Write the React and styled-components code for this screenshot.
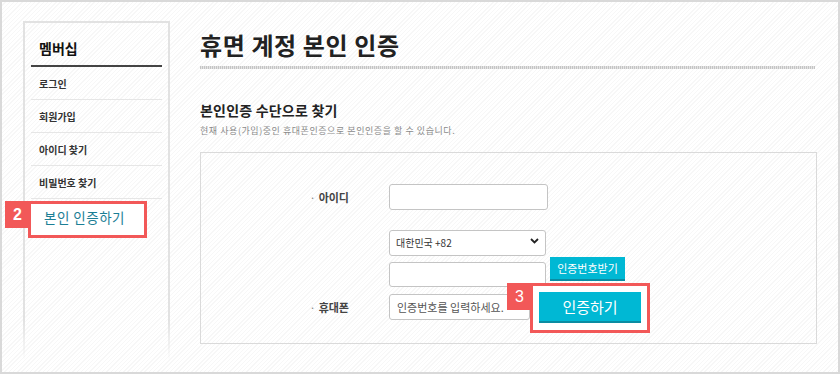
import React from "react";
import styled, { createGlobalStyle } from "styled-components";

const GlobalStyle = createGlobalStyle`
  html, body { margin: 0; padding: 0; background: #fff; }
  * { box-sizing: border-box; }
  body { font-family: "Noto Sans CJK KR", "Noto Sans", sans-serif; }
`;

const RED = "#f25858";
const CYAN = "#00b8d4";

const Frame = styled.div`
  width: 840px;
  height: 374px;
  border: 2px solid #d9d9d9;
  background: repeating-linear-gradient(135deg, #ffffff 0 2px, #f7f7f7 2px 3px);
  display: flex;
  align-items: flex-start;
  padding: 19px 0 0 21px;
  overflow: hidden;
`;

const Sidebar = styled.nav`
  width: 147px;
  height: 338px;
  border: 2px solid transparent;
  border-bottom: none;
  border-image: linear-gradient(to bottom, #e2e2e2 0%, #e2e2e2 88%, rgba(226, 226, 226, 0) 100%) 2;
  padding: 0 6px;
  flex-shrink: 0;
`;

const SideHeader = styled.div`
  height: 44px;
  padding: 8px 0 0 8px;
  display: flex;
  align-items: center;
  font-size: 14px;
  font-weight: 700;
  color: #111;
  border-bottom: 2px solid #444;
`;

const SideItem = styled.div`
  position: relative;
  height: 33px;
  display: flex;
  align-items: center;
  padding-left: 8px;
  font-size: 10px;
  font-weight: 700;
  color: #333;
  border-bottom: ${(p) => (p.$last ? "none" : "1px solid #e6e6e6")};
`;

const ActiveLabel = styled.span`
  position: relative;
  z-index: 2;
  margin: 3px 0 0 5px;
  font-size: 13.5px;
  font-weight: 400;
  letter-spacing: 0.5px;
  color: #1b7e95;
`;

const SideCallout = styled.div`
  position: absolute;
  left: -3px;
  top: 2px;
  width: 119px;
  height: 37px;
  border: 3px solid ${RED};
  background: #fff;
  z-index: 1;
`;

const Badge = styled.div`
  position: absolute;
  left: -26px;
  top: -3px;
  width: 25px;
  height: 27px;
  background: ${RED};
  color: #fff;
  font-family: "Liberation Sans", Arial, sans-serif;
  font-size: 16px;
  display: flex;
  align-items: center;
  justify-content: center;
  z-index: 3;
`;

const Main = styled.main`
  margin-left: 30px;
  width: 617px;
  display: flex;
  flex-direction: column;
`;

const Title = styled.h1`
  margin: 9px 0 0;
  font-size: 24px;
  line-height: 30px;
  font-weight: 700;
  letter-spacing: 0.6px;
  color: #222;
`;

const DottedRule = styled.div`
  margin-top: 6px;
  width: 615px;
  height: 3px;
  background: repeating-linear-gradient(90deg, #c4c4c4 0 1px, #e4e4e4 1px 2px);
`;

const SubTitle = styled.h2`
  margin: 32px 0 0;
  font-size: 14px;
  line-height: 18px;
  font-weight: 700;
  letter-spacing: 0.2px;
  color: #222;
`;

const Desc = styled.p`
  margin: 6px 0 0;
  font-size: 9px;
  line-height: 12px;
  letter-spacing: 0.55px;
  color: #8a8a8a;
`;

const FormBox = styled.div`
  margin-top: 15px;
  width: 617px;
  height: 192px;
  border: 1px solid #dadada;
  padding: 31px 0 0 0;
  display: flex;
  flex-direction: column;
  gap: 18px;
`;

const FormRow = styled.div`
  display: grid;
  grid-template-columns: 148px 1fr;
  column-gap: 40px;
  align-items: ${(p) => p.$align || "center"};
`;

const Label = styled.div`
  text-align: right;
  font-size: 11px;
  font-weight: 700;
  color: #444;
  line-height: 26px;
`;

const Dot = styled.span`
  color: #888;
  font-weight: 400;
  margin-right: 3px;
`;

const TextInput = styled.input`
  width: ${(p) => p.$w}px;
  height: ${(p) => p.$h || 26}px;
  margin-top: ${(p) => p.$mt || 0}px;
  border: 1px solid #c4c4c4;
  border-radius: 3px;
  background: #fff;
  padding: 0 7px;
  font-family: inherit;
  font-size: 11px;
  color: #333;
  outline: none;
  flex-shrink: 0;
  &::placeholder { color: #555; }
`;

const SelectWrap = styled.div`
  position: relative;
  width: 157px;
  height: 26px;
`;

const Select = styled.select`
  appearance: none;
  width: 100%;
  height: 100%;
  border: 1px solid #c4c4c4;
  border-radius: 3px;
  background: #fff;
  padding: 0 6px;
  font-family: inherit;
  font-size: 10px;
  color: #333;
  outline: none;
`;

const Chevron = styled.svg`
  position: absolute;
  right: 7px;
  top: 10px;
  pointer-events: none;
`;

const PhoneCol = styled.div`
  display: flex;
  flex-direction: column;
`;

const CodeRow = styled.div`
  display: flex;
  align-items: flex-start;
  gap: 4px;
  margin-top: 3px;
`;

const SmallButton = styled.button`
  width: 75px;
  height: 24px;
  border: none;
  border-bottom: 2px solid #0b8ca2;
  background: ${CYAN};
  color: #fff;
  font-family: inherit;
  font-size: 11px;
  padding: 0;
`;

const ConfirmRow = styled.div`
  display: flex;
  align-items: center;
  height: 26px;
  margin-top: 7px;
`;

const Callout = styled.div`
  position: relative;
  width: 120px;
  height: 50px;
  border: 3px solid ${RED};
  background: #fff;
  padding: 6px;
  flex-shrink: 0;
  margin-top: 2px;
`;

const BigButton = styled.button`
  width: 102px;
  height: 31px;
  border: none;
  border-bottom: 2px solid #0b8ca2;
  background: ${CYAN};
  color: #fff;
  font-family: inherit;
  font-size: 15px;
  padding: 0;
`;

const sideItems = ["로그인", "회원가입", "아이디 찾기", "비밀번호 찾기"];

export default function App() {
  return (
    <>
      <GlobalStyle />
      <Frame>
        <Sidebar>
          <SideHeader>멤버십</SideHeader>
          {sideItems.map((t) => (
            <SideItem key={t}>{t}</SideItem>
          ))}
          <SideItem $last>
            <SideCallout>
              <Badge>2</Badge>
            </SideCallout>
            <ActiveLabel>본인 인증하기</ActiveLabel>
          </SideItem>
        </Sidebar>
        <Main>
          <Title>휴면 계정 본인 인증</Title>
          <DottedRule />
          <SubTitle>본인인증 수단으로 찾기</SubTitle>
          <Desc>현재 사용(가입)중인 휴대폰인증으로 본인인증을 할 수 있습니다.</Desc>
          <FormBox>
            <FormRow>
              <Label>
                <Dot>·</Dot>아이디
              </Label>
              <TextInput $w={159} type="text" />
            </FormRow>
            <FormRow $align="end">
              <Label>
                <Dot>·</Dot>휴대폰
              </Label>
              <PhoneCol>
                <SelectWrap>
                  <Select defaultValue="82">
                    <option value="82">대한민국 +82</option>
                  </Select>
                  <Chevron width="9" height="6" viewBox="0 0 9 6">
                    <path d="M1 1 L4.5 4.5 L8 1" fill="none" stroke="#222" strokeWidth="1.8" />
                  </Chevron>
                </SelectWrap>
                <CodeRow>
                  <TextInput $w={157} $h={25} $mt={5} type="text" />
                  <SmallButton>인증번호받기</SmallButton>
                </CodeRow>
                <ConfirmRow>
                  <TextInput $w={141} type="text" placeholder="인증번호를 입력하세요." />
                  <Callout>
                    <Badge>3</Badge>
                    <BigButton>인증하기</BigButton>
                  </Callout>
                </ConfirmRow>
              </PhoneCol>
            </FormRow>
          </FormBox>
        </Main>
      </Frame>
    </>
  );
}
